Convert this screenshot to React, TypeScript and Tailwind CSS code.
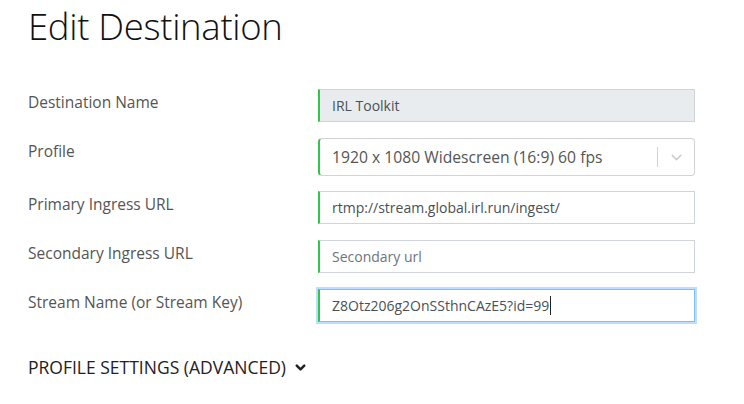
import { ChevronDown } from "lucide-react"

const font = { fontFamily: "'Open Sans', 'Liberation Sans', sans-serif" }

function Row({ label, children }: { label: string; children: React.ReactNode }) {
  return (
    <div className="flex items-start">
      <div className="w-[290px] shrink-0 pt-[2px] text-[15.5px] leading-[1.45] text-[#555]">{label}</div>
      <div className="w-[377px]">{children}</div>
    </div>
  )
}

export default function App() {
  return (
    <div className="h-[404px] w-[744px] overflow-hidden bg-white pl-[28px]" style={font}>
      <h1 className="pt-[3px] text-[36.5px] font-light leading-[1.3] tracking-[-0.3px] text-[#111]">Edit Destination</h1>

      <div className="mt-[39px] flex flex-col gap-[16px]">
        <Row label="Destination Name">
          <div className="flex h-[33px] items-center border border-l-2 border-[#cfd4da] border-l-[#2fc64a] bg-[#e9ecef] pl-[12px] text-[14px] text-[#495057]">
            IRL Toolkit
          </div>
        </Row>

        <Row label="Profile">
          <div className="-mb-px flex h-[38px] items-center rounded-[4px] border border-l-2 border-[#d3d3d3] border-l-[#2fc64a] bg-white">
            <span className="flex-1 pl-[12px] text-[15.7px] text-[#555]">1920 x 1080 Widescreen (16:9) 60 fps</span>
            <span className="h-[20px] w-px bg-[#d3d3d3]" />
            <span className="flex w-[36px] items-center justify-center text-[#ccc]">
              <ChevronDown size={17} strokeWidth={2} />
            </span>
          </div>
        </Row>

        <Row label="Primary Ingress URL">
          <div className="flex h-[33px] items-center border border-l-2 border-[#cfd4da] border-l-[#2fc64a] bg-white pl-[12px] text-[14px] text-[#495057]">
            rtmp://stream.global.irl.run/ingest/
          </div>
        </Row>

        <Row label="Secondary Ingress URL">
          <div className="flex h-[33px] items-center border border-l-2 border-[#cfd4da] border-l-[#2fc64a] bg-white pl-[12px] text-[14px] text-[#6c757d]">
            Secondary url
          </div>
        </Row>

        <Row label="Stream Name (or Stream Key)">
          <div className="flex h-[33px] items-center border border-l-2 border-[#80bdff] border-l-[#2fc64a] bg-white pl-[12px] text-[14px] text-[#495057] shadow-[0_0_0_2px_rgba(0,123,255,0.25)]">
            Z8Otz206g2OnSSthnCAzE5?id=99
            <span className="ml-px h-[19px] w-px bg-[#222]" />
          </div>
        </Row>
      </div>

      <div className="mt-[32px] flex items-center gap-[7px] text-[17.5px] text-[#222]">
        <span>PROFILE SETTINGS (ADVANCED)</span>
        <ChevronDown size={15} strokeWidth={4} />
      </div>
    </div>
  )
}
